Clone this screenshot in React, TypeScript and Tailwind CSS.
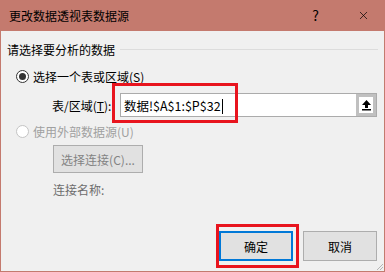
import { X } from "lucide-react";

const font = { fontFamily: '"Noto Sans CJK SC", "Noto Sans", sans-serif' };

function Radio({ checked, disabled }: { checked?: boolean; disabled?: boolean }) {
  return (
    <span
      className={`flex h-[13px] w-[13px] items-center justify-center rounded-full border bg-white ${
        disabled ? "border-[#c4c4c4]" : "border-[#333333]"
      }`}
    >
      {checked && <span className="h-[7px] w-[7px] rounded-full bg-[#333333]" />}
    </span>
  );
}

export default function App() {
  return (
    <div
      className="relative h-[272px] w-[385px] overflow-hidden border-x border-b border-[#c47a6e] bg-[#f0f0f0] text-[12px] leading-[17px] text-black"
      style={font}
    >
      {/* title bar */}
      <div className="-mx-px flex h-[31px] items-center bg-[#c47a6e] pl-[9px]">
        <span className="flex-1">更改数据透视表数据源</span>
        <span className="mr-[38px] text-[14px]">?</span>
        <X className="mr-[15px] h-[13px] w-[13px]" strokeWidth={1.3} />
      </div>

      {/* group heading */}
      <div className="mt-[10px] flex items-center pl-[6px] pr-[6px]">
        <span>请选择要分析的数据</span>
        <span className="ml-[5px] h-px flex-1 bg-[#dcdcdc]" />
      </div>

      {/* option 1 */}
      <div className="mt-[10px] flex items-center gap-[4px] pl-[15px]">
        <Radio checked />
        <span>
          选择一个表或区域(<span className="underline">S</span>)
        </span>
      </div>

      <div className="mt-[8px] flex items-center pl-[51px]">
        <span className="w-[68px]">
          表/区域(<span className="underline">T</span>):
        </span>
        <div className="flex h-[24px] w-[257px] items-center border border-[#ababab] bg-white">
          <span className="flex-1 pl-[3px] text-[12.5px]">
            数据!$A$1:$P$32<span className="ml-px inline-block h-[15px] w-px translate-y-[3px] bg-black" />
          </span>
          <span className="flex h-full w-[20px] items-center justify-center border-[3px] border-[#c0c0c0] bg-white">
            <svg width="11" height="12" viewBox="0 0 11 12">
              <path d="M5.5 1 L10 6 H7 V9 H4 V6 H1 Z" fill="#000" />
              <rect x="1" y="10" width="9" height="1.5" fill="#000" />
            </svg>
          </span>
        </div>
      </div>

      {/* option 2 */}
      <div className="mt-[6px] flex items-center gap-[4px] pl-[15px] text-[#a0a0a0]">
        <Radio disabled />
        <span>使用外部数据源(U)</span>
      </div>

      <div className="mt-[5px] pl-[52px]">
        <div className="flex h-[28px] w-[90px] items-center justify-center border border-[#adadad] bg-[#e1e1e1] text-[#838383]">
          选择连接(C)...
        </div>
        <div className="mt-[8px] text-[#6d6d6d]">连接名称:</div>
      </div>

      {/* footer buttons */}
      <div className="mt-[33px] flex justify-end gap-[10px] pr-[7px]">
        <div className="flex h-[30px] w-[74px] items-center justify-center border-2 border-[#0078d7] bg-[#e1e1e1]">确定</div>
        <div className="flex h-[30px] w-[74px] items-center justify-center border border-[#adadad] bg-[#e1e1e1]">取消</div>
      </div>

      {/* resize grip */}
      <svg className="absolute bottom-0 right-0" width="10" height="10" viewBox="0 0 10 10">
        <path d="M9 3 L3 9 M9 6 L6 9" stroke="#b5b5b5" strokeWidth="1" />
      </svg>

      {/* red annotation boxes */}
      <div className="absolute left-[111px] top-[83px] h-[40px] w-[126px] border-[3px] border-[#e8141e]" />
      <div className="absolute left-[215px] top-[224px] h-[44px] w-[83px] border-[3px] border-[#e8141e]" />
    </div>
  );
}
